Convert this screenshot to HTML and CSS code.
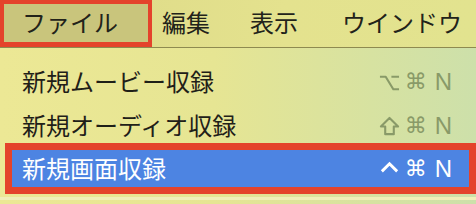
FILE: index.html
```html
<!DOCTYPE html>
<html lang="ja">
<head>
    <meta charset="UTF-8">
    <title>ファイル メニュー</title>
    <link rel="stylesheet" href="styles.css">
</head>
<body>
    <div class="screen">
        <!-- Menu bar -->
        <div class="menubar">
            <div class="menu-title marked">ファイル</div>
            <div class="menu-title t-edit">編集</div>
            <div class="menu-title t-view">表示</div>
            <div class="menu-title t-window">ウインドウ</div>
        </div>

        <!-- File menu -->
        <div class="menu">
            <div class="menu-item">
                <span class="label">新規ムービー収録</span>
                <span class="keys">
                    <svg class="key-icon" viewBox="0 0 22 22"><path d="M1 5 H7 L15 18 H21 M13 5 H21" /></svg>
                    <span class="cmd">⌘</span><span class="letter">N</span>
                </span>
            </div>
            <div class="menu-item">
                <span class="label">新規オーディオ収録</span>
                <span class="keys">
                    <svg class="key-icon" viewBox="0 0 22 22"><path d="M11 2 L20 11 H15.5 V19 H6.5 V11 H2 Z" /></svg>
                    <span class="cmd">⌘</span><span class="letter">N</span>
                </span>
            </div>
            <div class="menu-item selected">
                <span class="label">新規画面収録</span>
                <span class="keys">
                    <svg class="key-icon ctrl" viewBox="0 0 22 22"><path d="M3 14 L11 6 L19 14" /></svg>
                    <span class="cmd">⌘</span><span class="letter">N</span>
                </span>
            </div>
            <div class="separator"></div>
        </div>
    </div>
</body>
</html>
```

FILE: styles.css
```css
body {
    margin: 0;
    font-family: "Noto Sans CJK JP", "Noto Sans", sans-serif;
    background: #e2df92;
}
.screen {
    width: 476px;
    height: 204px;
    overflow: hidden;
    background: linear-gradient(90deg, #ece895 0%, #e6e593 45%, #cde0aa 100%);
}

/* Menu bar */
.menubar {
    display: flex;
    align-items: stretch;
    height: 47px;
    background: linear-gradient(90deg, #dcd886 0%, #e4e28e 60%, #e2e38f 100%);
    border-bottom: 1px solid #8e8a50;
}
.menu-title {
    display: flex;
    align-items: center;
    font-size: 24px;
    color: #22231a;
    line-height: 1;
    padding-bottom: 3px;
}
.menu-title.marked {
    box-sizing: border-box;
    width: 152px;
    padding-left: 18px;
    background: #c9c57c;
    border: 4px solid #e4432b;
    border-bottom-width: 5px;
}
.t-edit {
    margin-left: 10px;
}
.t-view {
    margin-left: 40px;
}
.t-window {
    margin-left: 44px;
}

/* Menu */
.menu {
    display: flex;
    flex-direction: column;
    padding-top: 12px;
}
.menu-item {
    display: flex;
    justify-content: space-between;
    align-items: center;
    height: 44px;
    padding: 0 24px 0 22px;
    font-size: 24px;
    color: #1f2018;
}
.menu-item .label {
    line-height: 1;
    padding-bottom: 2px;
}
.keys {
    display: flex;
    align-items: center;
    gap: 5px;
    color: #899a68;
}
.key-icon {
    width: 21px;
    height: 21px;
    fill: none;
    stroke: currentColor;
    stroke-width: 2.2;
    stroke-linejoin: round;
}
.key-icon.ctrl {
    stroke-width: 3;
    stroke-linejoin: miter;
}
.cmd {
    font-family: "DejaVu Sans", sans-serif;
    font-size: 22px;
    line-height: 1;
}
.letter {
    font-family: "Liberation Sans", sans-serif;
    font-size: 24px;
    line-height: 1;
    margin-left: 3px;
}
.menu-item.selected {
    box-sizing: border-box;
    height: 51px;
    margin: -5px 0 0 5px;
    padding: 0 17px 0 10px;
    background: #4d84e2;
    border: 7px solid #e4432b;
    color: #ffffff;
}
.menu-item.selected .keys {
    color: #ffffff;
}
.separator {
    height: 3px;
    margin-top: 3px;
    background: #f0efb8;
}
```
